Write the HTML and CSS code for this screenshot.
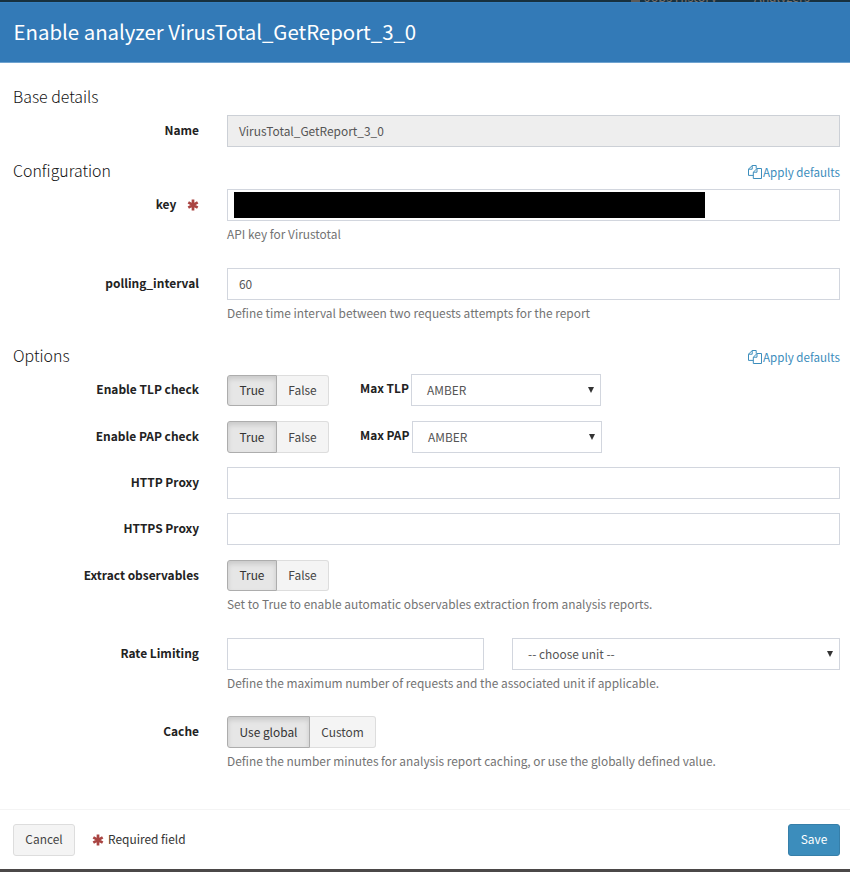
FILE: index.html
```html
<!DOCTYPE html>
<html lang="en">
<head>
<meta charset="utf-8">
<title>Enable analyzer</title>
<link rel="stylesheet" href="styles.css">
</head>
<body>
<svg class="defs" aria-hidden="true">
  <symbol id="asterisk" viewBox="0 0 12 12">
    <path d="M6 .5v11M1.3 3.3l9.4 5.4M10.7 3.3L1.3 8.7" fill="none" stroke="currentColor" stroke-width="2.7"/>
  </symbol>
  <symbol id="copy" viewBox="0 0 14 14">
    <path d="M5.3 10.4H.5V4.2L4.2.5h4v3M.5 4.2h3.7V.5M5.3 7.2L9 3.5h4.5v10H5.3zM5.3 7.2H9V3.5" fill="none" stroke="currentColor" stroke-width="1"/>
  </symbol>
</svg>
<nav class="backdrop-nav"><span class="nav-icon"></span><span class="nav-item">Jobs History</span><span class="nav-item">Analyzers</span></nav>
<main class="modal">
  <header class="modal-header"><h1>Enable analyzer VirusTotal_GetReport_3_0</h1></header>
  <form class="modal-body">
    <div class="section"><h2>Base details</h2></div>
    <div class="row name-row">
      <label class="label">Name</label>
      <div class="field"><div class="input disabled">VirusTotal_GetReport_3_0</div></div>
    </div>
    <div class="section"><h2>Configuration</h2><a class="apply"><svg class="copy"><use href="#copy"/></svg>Apply defaults</a></div>
    <div class="row key-row">
      <label class="label">key <svg class="star"><use href="#asterisk"/></svg></label>
      <div class="field">
        <div class="input key"><span class="redacted"></span></div>
        <p class="help">API key for Virustotal</p>
      </div>
    </div>
    <div class="row polling-row">
      <label class="label">polling_interval</label>
      <div class="field"><div class="input">60</div><p class="help">Define time interval between two requests attempts for the report</p></div>
    </div>
    <div class="section"><h2>Options</h2><a class="apply"><svg class="copy"><use href="#copy"/></svg>Apply defaults</a></div>
    <div class="row tlp-row">
      <label class="label">Enable TLP check</label>
      <div class="field inline">
        <div class="toggle"><span class="btn active">True</span><span class="btn">False</span></div>
        <label class="max">Max TLP</label>
        <div class="input select short">AMBER<svg class="caret" viewBox="0 0 6 6"><path d="M0 0h6L3 6z"/></svg></div>
      </div>
    </div>
    <div class="row pap-row">
      <label class="label">Enable PAP check</label>
      <div class="field inline">
        <div class="toggle"><span class="btn active">True</span><span class="btn">False</span></div>
        <label class="max pap">Max PAP</label>
        <div class="input select short">AMBER<svg class="caret" viewBox="0 0 6 6"><path d="M0 0h6L3 6z"/></svg></div>
      </div>
    </div>
    <div class="row http-row"><label class="label">HTTP Proxy</label><div class="field"><div class="input"></div></div></div>
    <div class="row https-row"><label class="label">HTTPS Proxy</label><div class="field"><div class="input"></div></div></div>
    <div class="row extract-row">
      <label class="label">Extract observables</label>
      <div class="field">
        <div class="toggle"><span class="btn active">True</span><span class="btn">False</span></div>
        <p class="help">Set to True to enable automatic observables extraction from analysis reports.</p>
      </div>
    </div>
    <div class="row rate-row">
      <label class="label">Rate Limiting</label>
      <div class="field">
        <div class="pair"><div class="input"></div><div class="input select">-- choose unit --<svg class="caret" viewBox="0 0 6 6"><path d="M0 0h6L3 6z"/></svg></div></div>
        <p class="help">Define the maximum number of requests and the associated unit if applicable.</p>
      </div>
    </div>
    <div class="row cache-row">
      <label class="label">Cache</label>
      <div class="field">
        <div class="toggle cache"><span class="btn active">Use global</span><span class="btn">Custom</span></div>
        <p class="help">Define the number minutes for analysis report caching, or use the globally defined value.</p>
      </div>
    </div>
  </form>
  <footer class="modal-footer">
    <span class="btn cancel">Cancel</span>
    <span class="required"><svg class="star"><use href="#asterisk"/></svg>Required field</span>
    <span class="btn save">Save</span>
  </footer>
</main>
</body>
</html>
```
FILE: styles.css
```css
* { box-sizing: border-box; }
body {
  margin: 0;
  height: 872px;
  overflow: hidden;
  background: #4b4848;
  color: #333;
  font-family: "Noto Sans CJK SC", "Noto Sans", sans-serif;
  font-size: 11.92px;
  line-height: 20px;
}
.defs { display: none; }
h1, h2, p { margin: 0; font-weight: 400; }
.backdrop-nav {
  height: 2px;
  padding-left: 631px;
  background: #17303e;
  color: #77726e;
  overflow: hidden;
  display: flex;
  align-items: flex-end;
  font-size: 12.6px;
  line-height: 10px;
}
.nav-icon { flex: none; width: 9px; height: 2px; margin-right: 4px; background: #5c5a58; }
.nav-item { flex: none; width: 110px; }
.modal { height: 867px; background: #fff; display: flex; flex-direction: column; }
.modal-header {
  height: 61px;
  padding: 0 13.5px;
  background: #337ab7;
  border-top: 1px solid #367fbe;
  border-bottom: 1px solid #6fa3d0;
  color: #fff;
}
h1 { font-size: 20.4px; line-height: 57px; }
.modal-body { height: 746px; padding: 16px 10px 0 13px; }
.section { height: 36px; display: flex; justify-content: space-between; align-items: flex-start; }
h2 { font-size: 15.9px; font-weight: 300; line-height: 36px; color: #111; }
.apply { display: flex; align-items: center; height: 37px; color: #3c8dbc; font-size: 11.6px; }
.copy { width: 14px; height: 14px; margin-right: 1px; }
.row { display: grid; grid-template-columns: 186px 613px; column-gap: 28px; }
.label { text-align: right; font-size: 11.96px; font-weight: 700; line-height: 20px; padding-top: 5px; color: #222; }
.name-row { height: 38px; }
.key-row { height: 79px; }
.polling-row { height: 70px; }
.tlp-row, .https-row { height: 47px; }
.pap-row, .http-row { height: 46px; }
.extract-row, .rate-row { height: 78px; }
.input {
  height: 32px;
  padding: 0 11px;
  border: 1px solid #d2d6de;
  background: #fff;
  color: #555;
  line-height: 29px;
}
.disabled { background: #eee; border-color: #ccd0d6; }
.key { padding: 2px 6px; }
.redacted { display: block; width: 471px; height: 26px; background: #000; }
.help { padding-top: 3px; color: #737373; }
.star { width: 12px; height: 12px; color: #a94442; vertical-align: -2px; margin-left: 8px; }
.inline { display: flex; }
.toggle { display: flex; height: 32px; }
.inline .toggle { height: 31px; margin-top: 1px; width: 133px; }
.pap-row .toggle { height: 32px; margin-top: 0; }
.pap-row .toggle .btn { line-height: 29px; }
.extract-row .toggle { height: 31px; }
.btn {
  border: 1px solid #ddd;
  border-radius: 0 3px 3px 0;
  background: #f4f4f4;
  color: #444;
  text-align: center;
  line-height: 28px;
}
.toggle .btn { width: 52px; border-left: 0; }
.toggle .active {
  width: 50px;
  border: 1px solid #adadad;
  border-radius: 3px 0 0 3px;
  background: #e6e6e6;
  box-shadow: inset 0 3px 5px rgba(0, 0, 0, .125);
  color: #333;
}
.cache .active { width: 83px; }
.cache .btn:last-child { width: 66px; }
.cache .btn { line-height: 29px; }
.max { width: 51px; padding-top: 4px; font-weight: 700; color: #222; white-space: nowrap; }
.pap { width: 52px; }
.select { display: flex; justify-content: space-between; align-items: flex-start; padding: 0 6px 0 15px; }
.short { width: 190px; }
.caret { width: 6px; height: 6px; margin-top: 12px; fill: #333; }
.pair { display: grid; grid-template-columns: 257px 328px; column-gap: 28px; }
.modal-footer {
  height: 60px;
  border-top: 1px solid #f4f4f4;
  padding: 14px 10px 0 13px;
  display: flex;
  align-items: flex-start;
}
.modal-footer .btn { height: 32px; border-radius: 3px; }
.cancel { width: 62px; }
.required { margin-left: 17px; line-height: 30px; flex: 1; }
.required .star { margin: 0 4px 0 0; }
.modal-footer .save { width: 52px; background: #3c8dbc; border-color: #367fa9; color: #fff; }
```
